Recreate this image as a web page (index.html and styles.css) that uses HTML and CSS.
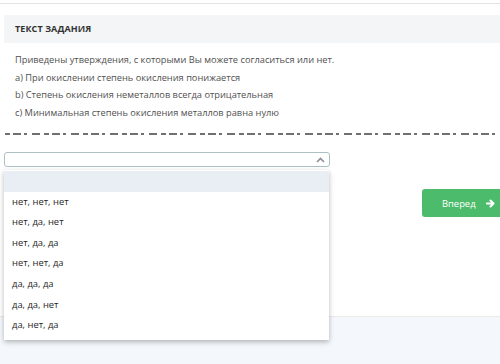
FILE: index.html
```html
<!DOCTYPE html>
<html lang="ru">
<head>
    <meta charset="UTF-8">
    <meta name="viewport" content="width=device-width, initial-scale=1.0">
    <title>Текст задания</title>
    <link rel="stylesheet" href="styles.css">
</head>
<body>
    <div class="page">
        <div class="topbar"></div>
        <div class="card">
            <div class="task-head">ТЕКСТ ЗАДАНИЯ</div>
            <div class="task-body">
                <p>Приведены утверждения, с которыми Вы можете согласиться или нет.</p>
                <p>a) При окислении степень окисления понижается</p>
                <p>b) Степень окисления неметаллов всегда отрицательная</p>
                <p>c) Минимальная степень окисления металлов равна нулю</p>
            </div>
            <div class="cut-line"></div>
            <div class="answer-row">
                <div class="select-wrap">
                    <div class="select-box">
                        <svg class="chevron" width="9" height="6" viewBox="0 0 9 6">
                            <path d="M1 5 L4.5 1.5 L8 5" fill="none" stroke="#8a8f94" stroke-width="1.6"/>
                        </svg>
                    </div>
                    <ul class="select-menu">
                        <li class="selected">&nbsp;</li>
                        <li>нет, нет, нет</li>
                        <li>нет, да, нет</li>
                        <li>нет, да, да</li>
                        <li>нет, нет, да</li>
                        <li>да, да, да</li>
                        <li>да, да, нет</li>
                        <li>да, нет, да</li>
                    </ul>
                </div>
                <button class="next-button">
                    <span>Вперед</span>
                    <svg width="9" height="9" viewBox="0 0 10 10">
                        <path d="M1 5 H8 M5 1.6 L8.4 5 L5 8.4" fill="none" stroke="#fff" stroke-width="2.2" stroke-linecap="round" stroke-linejoin="round"/>
                    </svg>
                </button>
            </div>
        </div>
    </div>
</body>
</html>
```

FILE: styles.css
```css
/* task page */
html, body {
    height: 100%;
}
body {
    font-family: "Open Sans", "Noto Sans", sans-serif;
    margin: 0;
    padding: 0;
    background-color: #f4f7fb;
}
.page {
    min-height: 364px;
}
.topbar {
    height: 3px;
    background-color: #fff;
    border-bottom: 1px solid #e4e4e4;
}
.card {
    height: 301px;
    padding: 11px 0 0 4px;
    background-color: #fff;
    border-bottom: 1px solid #ece9e9;
}
.task-head {
    height: 28px;
    line-height: 28px;
    padding-left: 11px;
    background-color: #f4f5f7;
    font-size: 9px;
    font-weight: 700;
    color: #333;
    letter-spacing: 0.1px;
}
.task-body {
    padding: 8px 11px 0;
    font-size: 9.25px;
    line-height: 17.5px;
    color: #505050;
}
.task-body p {
    margin: 0;
}
.cut-line {
    height: 2px;
    margin: 12px 0 0 1px;
    background-image: repeating-linear-gradient(90deg,
        #707070 0 5px, transparent 5px 8px,
        #707070 8px 16px, transparent 16px 19px,
        #707070 19px 22px, transparent 22px 27px,
        #707070 27px 35px, transparent 35px 39px);
}
.answer-row {
    display: flex;
    justify-content: space-between;
    align-items: flex-start;
    margin-top: 17px;
}
.select-wrap {
    position: relative;
    width: 326px;
}
.select-box {
    height: 13px;
    border: 1px solid #aebfc6;
    border-radius: 3px;
    background-color: #fff;
    display: flex;
    justify-content: flex-end;
    align-items: center;
    padding-right: 4px;
}
.select-menu {
    position: absolute;
    top: 18px;
    left: 0;
    width: 325px;
    margin: 0;
    padding: 1px 0 4px;
    list-style: none;
    background-color: #fff;
    box-shadow: 0 2px 5px rgba(0,0,0,0.28);
    z-index: 2;
}
.select-menu li {
    height: 20.6px;
    line-height: 20.6px;
    padding-left: 8px;
    font-size: 9.4px;
    color: #1f1f1f;
}
.select-menu li.selected {
    background-color: #e8eef3;
}
.next-button {
    margin-top: 37px;
    width: 78px;
    height: 28px;
    display: flex;
    align-items: center;
    justify-content: space-between;
    padding: 0 5px 0 20px;
    border: none;
    border-radius: 3px 0 0 3px;
    background-color: #4cbb6b;
    color: #fff;
    font-family: "Open Sans", sans-serif;
    font-size: 9.4px;
    cursor: pointer;
}
```
